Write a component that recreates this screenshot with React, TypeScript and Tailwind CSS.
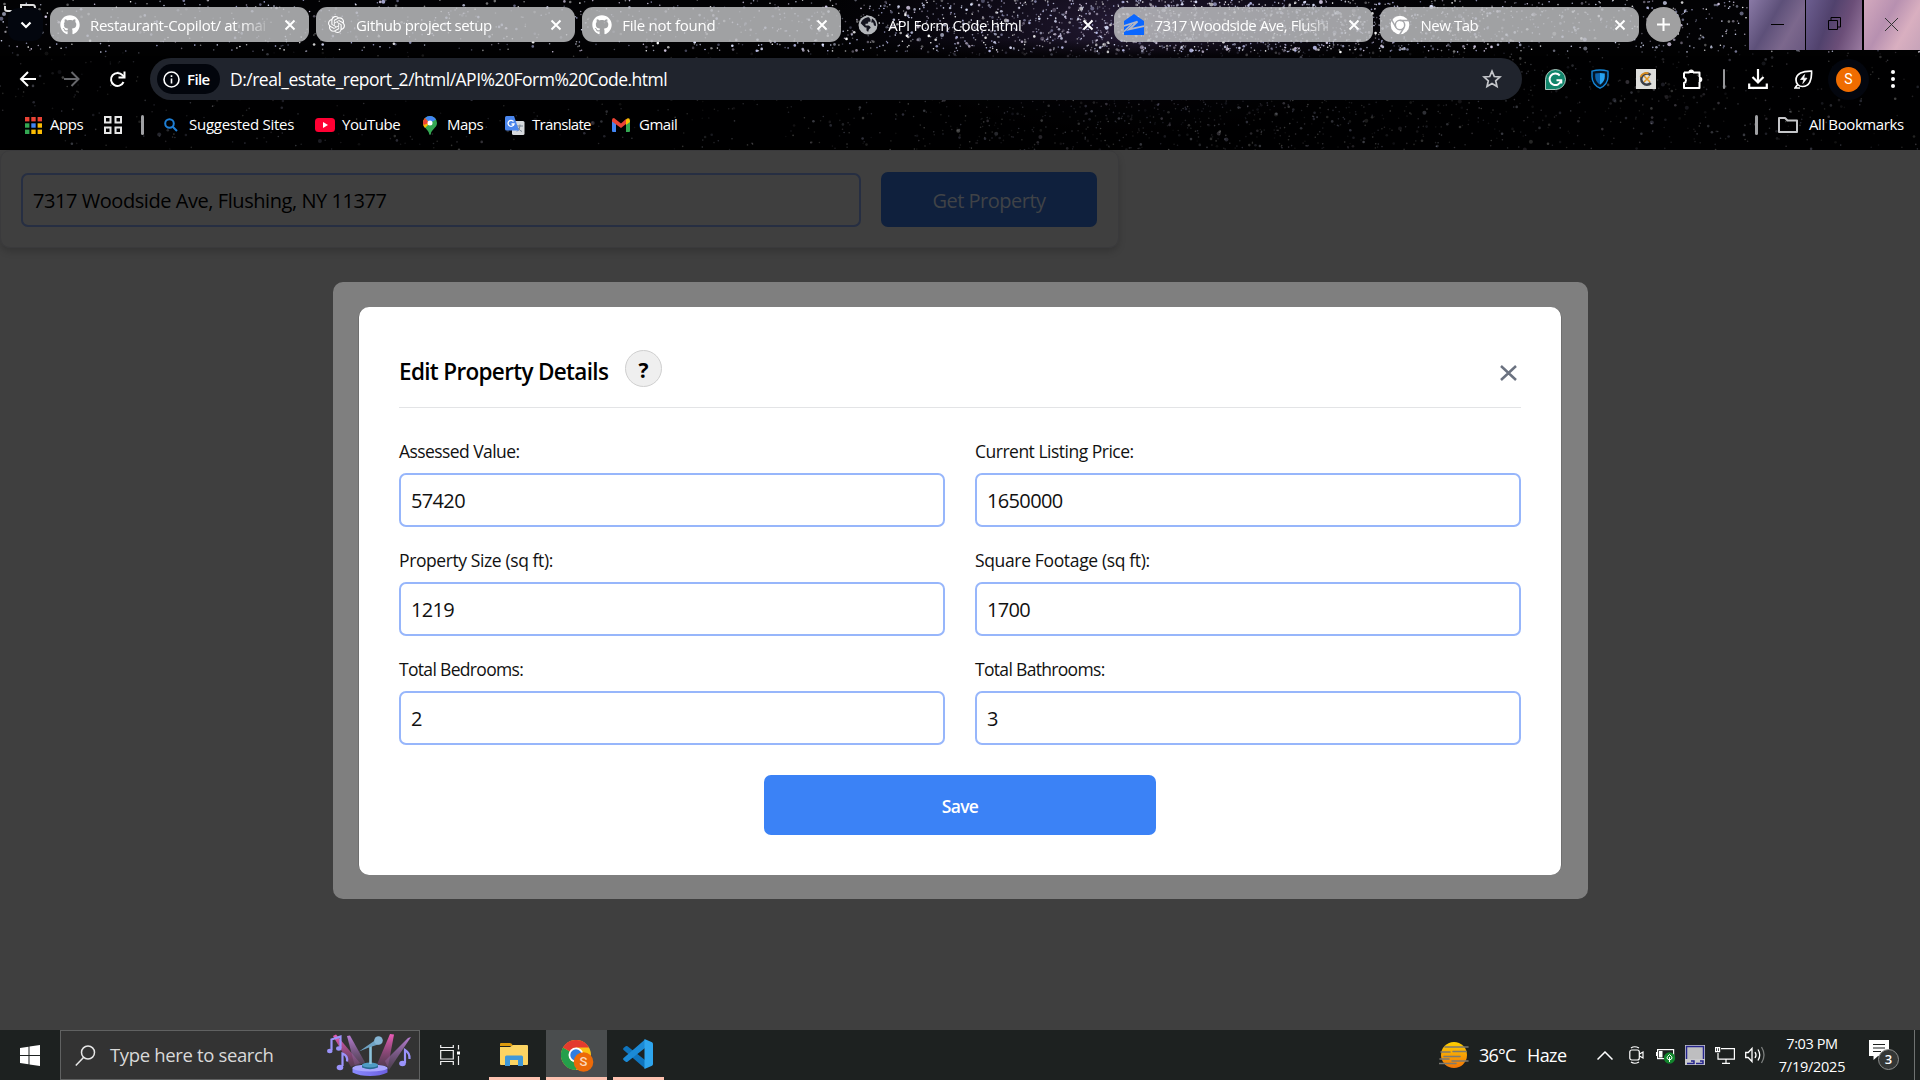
import React from "react";
import { FaGithub } from "react-icons/fa";
import { SiOpenai } from "react-icons/si";

function makeRandom(seed: number) {
  let s = seed;
  return () => {
    s = (s * 1664525 + 1013904223) % 4294967296;
    return s / 4294967296;
  };
}

type Star = { x: number; y: number; r: number; o: number; c: string };

function makeStars(): Star[] {
  const rnd = makeRandom(42);
  const out: Star[] = [];
  const colors = ["#ffffff", "#dfe4ff", "#b9bce8", "#cfc4de"];
  while (out.length < 4600) {
    const x = rnd() * 1920;
    const y = rnd() * 150;
    const d = (x - 1220) / 330;
    const density = 0.2 + 0.8 * Math.exp(-d * d);
    if (rnd() > density) continue;
    const low = y > 52;
    if (low && rnd() > 0.4) continue;
    const big = rnd();
    out.push({
      x: Math.round(x * 10) / 10,
      y: Math.round(y * 10) / 10,
      r: big > 0.985 ? 2 : big > 0.82 ? 1.3 : 0.8,
      o: low ? 0.06 + rnd() * 0.2 : 0.3 + rnd() * 0.7,
      c: colors[Math.floor(rnd() * 4)],
    });
  }
  return out;
}

const stars = makeStars();

const Starfield = () => (
  <svg className="absolute inset-0" width="1920" height="150" viewBox="0 0 1920 150">
    <defs>
      <radialGradient id="nebula" cx="0.5" cy="0.5" r="0.5">
        <stop offset="0" stopColor="#3a2a52" stopOpacity="0.65" />
        <stop offset="1" stopColor="#120c24" stopOpacity="0" />
      </radialGradient>
      <linearGradient id="shade" x1="0" y1="0" x2="0" y2="1">
        <stop offset="0" stopColor="#000" stopOpacity="0" />
        <stop offset="1" stopColor="#000" stopOpacity="0.75" />
      </linearGradient>
    </defs>
    <rect width="1920" height="150" fill="#020204" />
    <ellipse cx="1130" cy="25" rx="300" ry="120" fill="url(#nebula)" />
    <rect y="40" width="1920" height="16" fill="url(#shade)" />
    <rect y="56" width="1920" height="94" fill="#000" opacity="0.72" />
    {stars.map((s, i) => (
      <circle key={i} cx={s.x} cy={s.y} r={s.r} fill={s.c} opacity={s.o} />
    ))}
    <path d="M5 6v3q0 2 2.500 2h5M21 8V5h12q2 0 2 3" stroke="#ddd" strokeWidth="2" fill="none" />
  </svg>
);

const Cross = ({ className = "" }: { className?: string }) => (
  <svg className={className} width="12" height="12" viewBox="0 0 12 12" stroke="currentColor" strokeWidth="2">
    <path d="M1.500 1.500l9 9M10.500 1.500l-9 9" />
  </svg>
);

const Globe = () => (
  <svg width="20" height="20" viewBox="0 0 20 20">
    <circle cx="10" cy="10" r="9.500" fill="#b4b7bb" />
    <path d="M11 2.200c-4 0-7 2.500-8.300 6L7 12.500h1.500V15c0 1 1 1.500 2 1.600 0-2 .5-2.600 2-3.600.5-.8-.5-2-2-2.500H7.500V8.800H9c1.500 0 1.200-1 1.200-2h2.300V4.500z" fill="#14141f" />
    <path d="M14 3.500l-.8 4h2l.8 3 2 .5c.3-3-1-6-4-7.500z" fill="#14141f" />
  </svg>
);

const Zillow = () => (
  <svg width="20" height="21" viewBox="0 0 20 21">
    <path d="M10 0l10 7v14H0V7z" fill="#0a66ff" />
    <path d="M0 12L13.500 7.500 5 15.500l15-3.300" fill="none" stroke="#b4b7c4" strokeWidth="1.800" />
    <path d="M0 17.500L8 10" fill="none" stroke="#b4b7c4" strokeWidth="1.500" />
  </svg>
);

const ChromeMono = () => (
  <svg width="20" height="20" viewBox="0 0 20 20" fill="none">
    <circle cx="10" cy="10" r="9.300" fill="#fff" />
    <circle cx="10" cy="10" r="4.700" stroke="#a6a7ab" strokeWidth="1.500" />
    <path d="M10 5.500h9M6 12.500L1.700 4.800M14 12.500L9.500 20" stroke="#a6a7ab" strokeWidth="1.500" />
  </svg>
);

type TabProps = {
  icon: React.ReactNode;
  title: string;
  spacing: string;
  active?: boolean;
};

const Tab = ({ icon, title, spacing, active }: TabProps) => (
  <div
    className={`flex h-[35px] w-[258.500px] shrink-0 items-center rounded-[11px] pr-[13px] pl-2.5 text-white ${
      active ? "" : "bg-[#bfc0c2]/84"
    }`}
  >
    <span className="flex w-5 justify-center">{icon}</span>
    <span
      className={`ml-2.5 h-5 w-[185px] text-[15px] leading-5 whitespace-nowrap [mask-image:linear-gradient(90deg,#000_150px,transparent_182px)] ${spacing}`}
    >
      {title}
    </span>
    <Cross className="ml-auto shrink-0" />
  </div>
);

const TabStrip = () => (
  <div className="flex h-[50px] items-start">
    <div className="mt-2 ml-2 flex h-[33px] w-[35px] items-center justify-center rounded-[10px] bg-[#03060e]">
      <svg width="12" height="8" viewBox="0 0 12 8" fill="none" stroke="#fff" strokeWidth="2.200">
        <path d="M1.500 1.500L6 6l4.500-4.500" />
      </svg>
    </div>
    <div className="mt-[7px] ml-[7px] flex gap-[7.600px]">
      <Tab icon={<FaGithub size={20} />} title="Restaurant-Copilot/ at mai" spacing="tracking-[-0.31px]" />
      <Tab icon={<SiOpenai size={17} />} title="Github project setup" spacing="tracking-[-0.4px]" />
      <Tab icon={<FaGithub size={20} />} title="File not found" spacing="tracking-[-0.25px]" />
      <Tab icon={<Globe />} title="API Form Code.html" spacing="tracking-[-0.35px]" active />
      <Tab icon={<Zillow />} title="7317 Woodside Ave, Flushi" spacing="tracking-[-0.45px]" />
      <Tab icon={<ChromeMono />} title="New Tab" spacing="tracking-[-0.45px]" />
    </div>
    <div className="mt-[7px] ml-[7px] flex size-[35px] items-center justify-center rounded-full bg-[#a0a0a1]">
      <svg width="13" height="13" viewBox="0 0 13 13" stroke="#fff" strokeWidth="2">
        <path d="M6.500 0v13M0 6.500h13" />
      </svg>
    </div>
    <div className="ml-auto flex h-[50px] w-[171px] gap-px bg-black text-black">
      <div className="flex h-full w-[56px] items-center justify-center bg-[linear-gradient(120deg,#8a7aa6,#5d5079_40%,#7c688d_70%,#6a5880)]">
        <svg width="13" height="13" viewBox="0 0 13 13" stroke="currentColor"><path d="M0 5.500h13" /></svg>
      </div>
      <div className="flex h-full w-[56px] items-center justify-center bg-[linear-gradient(110deg,#6c5e90,#51426d_40%,#6b4e78_65%,#9a7ba0)]">
        <svg className="-mt-1" width="13" height="13" viewBox="0 0 13 13" fill="none" stroke="currentColor">
          <path d="M.5 3.500h9v9h-9zM3 3V.5h9.500V10H10" />
        </svg>
      </div>
      <div className="ml-px flex h-full flex-1 items-center justify-center bg-[linear-gradient(120deg,#d3a9be,#b790b0_40%,#d9afc0_70%,#c7a3b9)] text-[#333]">
        <svg className="-mt-0.5 mr-0.5" width="13" height="13" viewBox="0 0 13 13" stroke="currentColor"><path d="M0 0l13 13M13 0L0 13" /></svg>
      </div>
    </div>
  </div>
);

const Toolbar = () => (
  <div className="mt-2 flex h-[42px] items-center text-white">
    <svg className="ml-[19px]" width="17" height="16" viewBox="0 0 17 16" fill="none" stroke="#fff" strokeWidth="2">
      <path d="M9 1L2 8l7 7M2 8H17" />
    </svg>
    <svg className="ml-7" width="16" height="16" viewBox="0 0 16 16" fill="none" stroke="#66676b" strokeWidth="2">
      <path d="M7.500 1l7 7-7 7M14.500 8H0" />
    </svg>
    <svg className="ml-[29px]" width="17" height="17" viewBox="0 0 17 17" fill="none" stroke="#fff" strokeWidth="2">
      <path d="M14.500 11A6.500 6.500 0 1 1 13.500 4.200L15.500 6.300" />
      <path d="M15.500 .5v6h-6" />
    </svg>
    <div className="ml-6 flex h-[42px] w-[1372px] items-center rounded-full bg-[#20242d] pl-[7px]">
      <div className="flex h-[30px] w-[63px] items-center rounded-full bg-[#02050c] pl-1.5">
        <svg width="17" height="17" viewBox="0 0 17 17" fill="none" stroke="#fff" strokeWidth="1.600">
          <circle cx="8.500" cy="8.500" r="7.500" />
          <path d="M8.500 7.500v5M8.500 4.300v1.800" />
        </svg>
        <span className="ml-[7px] text-[15px] leading-5 font-semibold tracking-[-0.6px]">File</span>
      </div>
      <span className="ml-2.5 text-[17.500px] leading-6 tracking-[-0.5px]">
        D:/real_estate_report_2/html/API%20Form%20Code.html
      </span>
      <svg className="mr-5 ml-auto" width="20" height="20" viewBox="0 0 20 20" fill="none" stroke="#c4c6ca" strokeWidth="1.700">
        <path d="M10 2.200l2.300 5.300 5.700.5-4.300 3.800 1.300 5.700-5-3-5 3 1.300-5.700L2 8l5.700-.5z" />
      </svg>
    </div>
    <svg className="ml-[23px]" width="21" height="21" viewBox="0 0 21 21" fill="none">
      <path d="M10.500.5a10 10 0 1 1 0 20H.5v-10a10 10 0 0 1 10-10z" fill="#11856b" stroke="#cfe8e0" strokeWidth=".8" />
      <path d="M14.800 6.500a5.800 5.800 0 1 0 1.300 4.700H11.500M16.300 11v3.500" stroke="#fff" strokeWidth="2" />
    </svg>
    <svg className="ml-[25px]" width="18" height="20" viewBox="0 0 18 20">
      <path d="M9 1q4 0 8 1.200v5.500c0 5-3 9-8 11.500C4 16.700 1 12.700 1 7.700V2.200Q5 1 9 1z" fill="#041526" stroke="#1485d6" strokeWidth="1.400" />
      <path d="M9 4v11.800C5.700 13.500 4.200 11 4.200 7.500V4.500z" fill="#0d64ae" />
      <path d="M9 4l4.800.5v3C13.800 11 12.300 13.500 9 15.800z" fill="#27a3f0" />
    </svg>
    <svg className="ml-[27px]" width="20" height="20" viewBox="0 0 20 20" fill="none">
      <rect width="20" height="20" fill="#dededc" />
      <path d="M14.500 6a5.500 5.500 0 1 0 .3 8" stroke="#3b3f48" strokeWidth="2.600" />
      <path d="M4.500 8a6 6 0 0 1 8-3.500" stroke="#d98d20" strokeWidth="1.800" />
      <path d="M8 7l6 6M13.500 7.500L8 13" stroke="#e59a25" strokeWidth="1.500" />
    </svg>
    <svg className="ml-[26px]" width="21" height="20" viewBox="0 0 21 20" fill="none" stroke="#fff" strokeWidth="2">
      <path d="M2 3.500h5.500M11 3.500h6.500V8M17.500 13v6H2v-5a2.900 2.900 0 0 0 0-5.500v-5" strokeLinejoin="round" />
      <path d="M7 3.500a2.200 2.500 0 0 1 4.400 0zM17.500 8.300a2.200 2.200 0 0 1 0 4.400z" fill="#fff" strokeWidth="1.200" />
    </svg>
    <div className="ml-5 h-5 w-0.5 rounded bg-[#98999c]" />
    <svg className="ml-[23px]" width="20" height="20" viewBox="0 0 20 20" fill="none" stroke="#fff" strokeWidth="2.200">
      <path d="M10 0v13M4.500 8l5.500 5.500L15.500 8M1.200 14.500V18.800h17.600V14.500" />
    </svg>
    <svg className="ml-[26px]" width="19" height="19" viewBox="0 0 19 19" fill="none" stroke="#fff" strokeWidth="1.700">
      <path d="M17.500 1.200C9 1 2 3 2 10c0 4 3 6.500 6.500 6.500C15.500 16.500 18 10 17.500 1.200zM3.500 14.500L1 18h5" />
      <path d="M10.500 4.500L6.500 9.500h3.300l-1 4 4.200-5.300H9.800z" fill="#fff" strokeWidth=".7" />
    </svg>
    <div className="ml-[15px] flex size-[41px] items-center justify-center rounded-full bg-[#03060e]">
      <div className="flex size-[25px] items-center justify-center rounded-full bg-[#ef6c00] font-['Roboto'] text-[14px]">S</div>
    </div>
    <div className="ml-[22px] flex flex-col gap-[3px]">
      <i className="size-1 rounded-full bg-white" />
      <i className="size-1 rounded-full bg-white" />
      <i className="size-1 rounded-full bg-white" />
    </div>
  </div>
);

const appColors = ["#ea4335", "#ea4335", "#ea4335", "#34a853", "#4285f4", "#fbbc04", "#34a853", "#fbbc04", "#fbbc04"];

const BookmarksBar = () => (
  <div className="flex h-[50px] items-center text-[15px] leading-5 text-white [&>span]:-mt-0.5">
    <svg className="ml-[25px]" width="17" height="17" viewBox="0 0 17 17">
      {appColors.map((c, i) => (
        <rect key={i} x={(i % 3) * 6.300} y={Math.floor(i / 3) * 6.300} width="4.400" height="4.400" fill={c} />
      ))}
    </svg>
    <span className="ml-2 w-[54px] tracking-[-0.45px]">Apps</span>
    <svg width="18" height="18" viewBox="0 0 18 18" fill="none" stroke="#e8e8e8" strokeWidth="2">
      <path d="M1 1h5.500v5.500H1zM11.500 1H17v5.500h-5.500zM1 11.500h5.500V17H1zM11.500 11.500H17V17h-5.500z" />
    </svg>
    <div className="ml-[19px] h-5 w-[3px] rounded bg-[#a0a1a4]" />
    <svg className="ml-5" width="14" height="14" viewBox="0 0 14 14" fill="none" stroke="#1e7fd6" strokeWidth="2">
      <circle cx="5.500" cy="5.500" r="4.300" />
      <path d="M8.700 8.700L13 13" />
    </svg>
    <span className="ml-[11px] w-[126px] tracking-[-0.27px]">Suggested Sites</span>
    <svg width="20" height="14" viewBox="0 0 20 14">
      <rect width="20" height="14" rx="3.500" fill="#ff0033" />
      <path d="M8 4l5 3-5 3z" fill="#fff" />
    </svg>
    <span className="ml-[7px] w-[81px] tracking-[-0.5px]">YouTube</span>
    <svg width="14" height="19" viewBox="0 0 14 19">
      <path d="M0 7a7 7 0 0 1 14 0c0 5-5.500 6-6.200 11q-.8 2-1.600 0C5.500 13 0 12 0 7z" fill="#34a853" />
      <path d="M0 7a7 7 0 0 1 2-5l5 5-5 5Q0 10 0 7z" fill="#fbbc04" />
      <path d="M7 0a7 7 0 0 1 6 3.500L7 7 2 2Q4 0 7 0z" fill="#4285f4" />
      <path d="M2 2l4 5L.5 9Q-1 5 2 2z" fill="#ea4335" />
      <circle cx="7" cy="7" r="2.500" fill="#fff" />
    </svg>
    <span className="ml-2.5 w-[58px] tracking-[-0.5px]">Maps</span>
    <svg width="20" height="19" viewBox="0 0 20 19">
      <rect x="7" y="5" width="12.500" height="14" rx="1.500" fill="#d7dade" />
      <path d="M12 10h6M15 8.500V10q-.5 4-3 5.500M13 11.500q1 3 4 4" stroke="#7b8794" fill="none" />
      <path d="M1.500 0H9l5 14.500H1.500Q0 14.500 0 13V1.500Q0 0 1.500 0z" fill="#4a86ee" />
      <path d="M8.500 5.500A3 3 0 1 0 9 8H6.500" stroke="#fff" strokeWidth="1.300" fill="none" />
    </svg>
    <span className="ml-[7px] w-20 tracking-[-0.68px]">Translate</span>
    <svg width="18" height="14" viewBox="0 0 18 14">
      <path d="M0 2h4v12H1q-1 0-1-1z" fill="#4285f4" />
      <path d="M14 2h4v11q0 1-1 1h-3z" fill="#34a853" />
      <path d="M0 2q0-2 2-2l7 5.500L14 1v5L9 10 0 3.500z" fill="#ea4335" />
      <path d="M14 1.500Q16-.5 17.500.8L18 4l-4 3z" fill="#fbbc04" />
    </svg>
    <span className="ml-[9px] tracking-[-0.5px]">Gmail</span>
    <div className="ml-auto h-5 w-[3px] rounded bg-[#a0a1a4]" />
    <svg className="ml-5" width="20" height="16" viewBox="0 0 20 16" fill="none" stroke="#c4c5c8" strokeWidth="2">
      <path d="M1 1h6l2.500 2.500H19V15H1z" strokeLinejoin="round" />
    </svg>
    <span className="mr-4 ml-[11px] w-[95px] tracking-[-0.4px] whitespace-nowrap">All Bookmarks</span>
  </div>
);

type FieldProps = { label: string; value: string; spacing: string };

const Field = ({ label, value, spacing }: FieldProps) => (
  <label className="flex h-[109px] flex-col">
    <span className={`h-[34px] text-[17.500px] leading-6 text-[#111] ${spacing}`}>{label}</span>
    <span className="flex h-[54px] items-center rounded-[7px] border-2 border-[#97b6fb] px-2.5 pt-0.5 text-[20px] tracking-[-0.65px] text-[#111]">
      {value}
    </span>
  </label>
);

const fields: FieldProps[] = [
  { label: "Assessed Value:", value: "57420", spacing: "tracking-[-0.57px]" },
  { label: "Current Listing Price:", value: "1650000", spacing: "tracking-[-0.5px]" },
  { label: "Property Size (sq ft):", value: "1219", spacing: "tracking-[-0.4px]" },
  { label: "Square Footage (sq ft):", value: "1700", spacing: "tracking-[-0.35px]" },
  { label: "Total Bedrooms:", value: "2", spacing: "tracking-[-0.68px]" },
  { label: "Total Bathrooms:", value: "3", spacing: "tracking-[-0.68px]" },
];

const Page = () => (
  <main className="relative h-[880px] bg-[#3f3f3f]">
    <section className="flex h-[98px] w-[1119px] items-start rounded-[10px] border border-[#3a3a3c] pt-[21px] pl-5 shadow-[0_4px_7px_rgba(0,0,0,0.16)]">
      <div className="mt-px flex h-[54px] w-[840px] items-center rounded-[7px] border-2 border-[#262e42] px-2.5 pt-0.5 text-[20px] tracking-[-0.44px] text-black">
        7317 Woodside Ave, Flushing, NY 11377
      </div>
      <button className="ml-5 h-[55px] w-[216px] rounded-[7px] bg-[#0f203d] pt-[3px] text-[20px] tracking-[-0.5px] text-[#404347]">
        Get Property
      </button>
    </section>
    <div className="absolute top-[132px] left-[333px] h-[617px] w-[1255px] rounded-[10px] bg-[#7f7f7f] px-[26px] pt-[25px]">
      <div className="h-[568px] w-[1202px] rounded-[10px] bg-white px-10 shadow-[1px_0_0_-0.500px_rgba(0,0,0,0.25),-1px_0_0_-0.500px_rgba(0,0,0,0.25)]">
        <header className="flex h-[101px] items-start border-b border-[#e3e4e6]">
          <h2 className="mt-[49px] w-[226px] text-[22.500px] leading-8 font-semibold tracking-[-0.67px] whitespace-nowrap text-black">
            Edit Property Details
          </h2>
          <button className="mt-[43px] flex size-[37px] items-center justify-center rounded-full border border-[#cfcfcf] bg-[#efefef] pt-1 text-[21px] font-bold text-black">
            ?
          </button>
          <svg className="mt-[58px] mr-1 ml-auto" width="17" height="16" viewBox="0 0 17 16" stroke="#6b7280" strokeWidth="2.500">
            <path d="M1 1l15 14M16 1L1 15" />
          </svg>
        </header>
        <div className="mt-[31px] grid grid-cols-2 gap-x-[30px]">
          {fields.map((f) => (
            <Field key={f.label} {...f} />
          ))}
        </div>
        <button className="mx-auto mt-[9px] block h-[60px] w-[392px] rounded-[7px] bg-[#3b82f6] pt-0.5 text-[17.500px] font-semibold tracking-[-0.7px] text-white">
          Save
        </button>
      </div>
    </div>
  </main>
);

const StageArt = () => (
  <svg width="86" height="48" viewBox="0 0 86 48">
    <defs>
      <linearGradient id="beamPink" x1="0" y1="0" x2="0" y2="1">
        <stop offset="0" stopColor="#ee5cb8" />
        <stop offset="1" stopColor="#8a4a80" stopOpacity=".4" />
      </linearGradient>
      <linearGradient id="beamPurple" x1="0" y1="0" x2="0" y2="1">
        <stop offset="0" stopColor="#b97fd6" />
        <stop offset="1" stopColor="#7a5580" stopOpacity=".35" />
      </linearGradient>
      <linearGradient id="podium" x1="0" y1="0" x2="1" y2="0">
        <stop offset="0" stopColor="#8a8bff" />
        <stop offset="1" stopColor="#6c5fe0" />
      </linearGradient>
    </defs>
    <path d="M6 5l3-1.500L33 32l-9 4z" fill="url(#beamPink)" />
    <path d="M20 5l3-.5 15 27-10 4z" fill="url(#beamPurple)" />
    <path d="M63 3l4 .5-6 32-11-2z" fill="url(#beamPink)" />
    <path d="M81 7l3-1-22 33-4-9z" fill="url(#beamPurple)" />
    <path d="M25.500 37v4.500q7 3.500 17.500 3.500t17.500-3.500V37z" fill="url(#podium)" />
    <ellipse cx="43" cy="37" rx="17.500" ry="3.500" fill="#a9a6ff" />
    <path d="M35 34v2.500q8 3.500 16 0V34z" fill="#2a6a94" />
    <ellipse cx="43" cy="34" rx="8" ry="2.500" fill="#4f9cc4" />
    <path d="M43.500 15v18" stroke="#8cc3dc" strokeWidth="2.600" />
    <path d="M32 20.500L50 8l2.500 5-12 4z" fill="#6fa3c4" />
    <circle cx="51.500" cy="9.500" r="4.300" fill="#86b5d4" />
    <g fill="none" stroke="#9b93fb" strokeWidth="2.200">
      <path d="M4.500 19V8.500l9-3V17M15.500 35V22.500q5.500 2 4.500 8M78 32V19q5 3 4.500 9" />
    </g>
    <g fill="#9b93fb">
      <ellipse cx="2.800" cy="20" rx="2.700" ry="2.200" />
      <ellipse cx="11.800" cy="17.500" rx="2.700" ry="2.200" />
      <ellipse cx="13" cy="36.500" rx="3.300" ry="2.800" />
      <ellipse cx="75.500" cy="32.500" rx="3.300" ry="2.800" />
    </g>
  </svg>
);

const ChromeColor = () => (
  <svg width="33" height="33" viewBox="0 0 33 33">
    <circle cx="15" cy="15" r="15" fill="#fbc116" />
    <path d="M15 15L2 7.500A15 15 0 0 0 15 30l6.500-11z" fill="#249f4b" />
    <path d="M15 15L2 7.500A15 15 0 0 1 28 7.500H15z" fill="#e33b2e" />
    <circle cx="15" cy="15" r="7.500" fill="#fff" />
    <circle cx="15" cy="15" r="5.700" fill="#2f7de1" />
    <circle cx="22.500" cy="22" r="9.800" fill="#ec6a08" />
  </svg>
);

const Taskbar = () => (
  <footer className="flex h-[50px] items-center bg-[#1d2120] text-white">
    <svg className="ml-5" width="20" height="21" viewBox="0 0 20 21" fill="#fff">
      <path d="M0 3l8.500-1.300V10H0zM9.500 1.500L20 0v10H9.500zM0 11h8.500v8.300L0 18zM9.500 11H20v10L9.500 19.500z" />
    </svg>
    <div className="ml-5 flex h-[50px] w-[360px] items-center border border-[#606161] bg-[#333333] pl-3.5">
      <svg width="21" height="21" viewBox="0 0 21 21" fill="none" stroke="#e8e8e8" strokeWidth="1.500">
        <circle cx="13" cy="7.500" r="6.500" />
        <path d="M8.500 12.500L.8 20.500" />
      </svg>
      <span className="ml-3.5 w-[217px] text-[18.500px] tracking-[-0.35px] text-[#d9d9d9]">Type here to search</span>
      <StageArt />
    </div>
    <svg className="ml-5" width="20" height="20" viewBox="0 0 20 20" fill="none" stroke="#f0f0f0" strokeWidth="1.200">
      <path d="M.7 0v2.500h12.600V0M.7 20v-3.500h12.600V20M.7 5.500h12.600v8.500H.7zM18.500 0v4.500M18.500 11v9" />
      <path d="M17 6.500h3v3h-3z" fill="#fff" stroke="none" />
    </svg>
    <div className="ml-[29px] flex h-[50px] w-[51px] items-center justify-center border-b-[3px] border-[#fdc2b0]">
      <svg className="mt-0.5 mr-0.5" width="28" height="23" viewBox="0 0 28 23">
        <path d="M0 1q0-1 1-1h9q2 0 3 3H0z" fill="#dc9a0c" />
        <path d="M0 4h10l3-2h14q1 0 1 1v18q0 1-1 1H1q-1 0-1-1z" fill="#fcd462" />
        <path d="M5 23v-9q0-1.500 1.500-1.500h15q1.500 0 1.500 1.500v9h-5v-6h-8v6z" fill="#3f98d8" />
      </svg>
    </div>
    <div className="ml-1.5 h-[50px] w-[61px] border-b-[3px] border-[#fdc2b0] bg-[#4a4d4e]">
      <div className="relative mt-2.5 ml-[15px] size-[33px]">
        <ChromeColor />
        <span className="absolute top-3 left-[17.500px] w-2.5 text-center font-['Roboto'] text-[13px] leading-5 font-medium text-[#fbd9bd]">S</span>
      </div>
    </div>
    <div className="ml-1.5 flex h-[50px] w-[51px] items-center justify-center border-b-[3px] border-[#fdc2b0]">
      <svg className="mr-0.5" width="30" height="30" viewBox="0 0 30 30">
        <path d="M.5 9l2.200-1.700q1-.6 1.800 0L22 21v8.500L.6 11q-1-1 0-2z" fill="#0f74bd" />
        <path d="M.5 21l2.200 1.700q1 .6 1.800 0L22 9V.5L.6 19q-1 1 0 2z" fill="#1b8ad6" />
        <path d="M21.500 0L29 3.300q1 .6 1 2V25q0 1.200-1 1.700L21.500 30z" fill="#2ea5ee" />
      </svg>
    </div>

    <svg className="ml-auto" width="30" height="26" viewBox="0 0 30 26">
      <defs>
        <linearGradient id="sun" x1="0" y1="0" x2="0" y2="1">
          <stop offset="0" stopColor="#ffd000" />
          <stop offset="1" stopColor="#f07408" />
        </linearGradient>
      </defs>
      <circle cx="15" cy="13" r="13" fill="url(#sun)" />
      <path d="M6 5h23M2 10h9M14 9.500h13M5 14.500h16M1 17h9M13 19h16M0 21.500h17" stroke="#7d7a70" strokeWidth="1.600" strokeLinecap="round" />
    </svg>
    <span className="ml-2.5 w-12 text-[18px] tracking-[-0.8px] whitespace-nowrap">36°C</span>
    <span className="w-[70px] text-[18px] tracking-[-0.6px]">Haze</span>
    <svg width="16" height="9" viewBox="0 0 16 9" fill="none" stroke="#fff" strokeWidth="1.500">
      <path d="M.5 8.500L8 1l7.500 7.500" />
    </svg>
    <svg className="ml-4" width="15" height="18" viewBox="0 0 15 18" fill="none" stroke="#fff" strokeWidth="1.200">
      <rect x=".8" y="4" width="9.500" height="10" rx="2" />
      <path d="M10.500 8l3.500-2v6l-3.500-2M2 2q3.500-2.500 8 0M2 16q3.500 2.500 8 0" />
    </svg>
    <svg className="ml-3" width="20" height="17" viewBox="0 0 20 17" fill="none">
      <rect x="1.600" y="2.600" width="16" height="9" stroke="#fff" strokeWidth="1.200" />
      <path d="M3 4h3.500v6.500H3zM0 5h1v4H0z" fill="#fff" />
      <circle cx="13.500" cy="11" r="5.700" fill="#12862d" />
      <path d="M13.500 7.500q-5 4 0 5.500 5-1.500 0-5.500zM13.500 10v5" stroke="#fff" />
    </svg>
    <svg className="ml-[9px]" width="20" height="20" viewBox="0 0 20 20">
      <rect width="20" height="20" fill="#c9c9cd" />
      <path d="M1.500 14V1.500h17V14" fill="#bebec0" stroke="#25258c" strokeWidth="1.500" />
      <path d="M2 18.500h7v-2.500H6M11 18.500h7v-2.500h-3" fill="none" stroke="#25258c" strokeWidth="1.500" />
    </svg>
    <svg className="ml-2.5" width="20" height="17" viewBox="0 0 20 17" fill="none" stroke="#fff" strokeWidth="1.200">
      <path d="M6 1.600h13.400v10.500H3V6M11 12v4M7 16.300h8" />
      <path d="M.6.600h4v4h-4zM2.600 1v3" />
    </svg>
    <svg className="ml-2.5" width="20" height="18" viewBox="0 0 20 18" fill="none" stroke="#fff" strokeWidth="1.300">
      <path d="M.7 6.500h2.500L7 2.500v13l-3.800-4H.7z" />
      <path d="M10 6q2 3 0 6M13 3.500q3.500 5.500 0 11" />
      <path d="M16.500 1q5 8 0 16" stroke="#7c7f7e" />
    </svg>
    <div className="ml-2 flex w-[78px] flex-col items-center text-[14.500px] leading-[23px] tracking-[-0.25px] whitespace-nowrap">
      <span className="tracking-[-0.4px]">7:03 PM</span>
      <span>7/19/2025</span>
    </div>
    <div className="relative ml-[18px] h-[30px] w-[31px]">
      <svg width="20" height="20" viewBox="0 0 20 20">
        <path d="M0 0h20v16H9l-4.500 4v-4H0z" fill="#fff" />
        <path d="M4 4.500h12M4 8h12M4 11.500h8" stroke="#1d2120" strokeWidth="1.200" />
      </svg>
      <span className="absolute top-[9px] left-[9px] flex size-[21px] items-center justify-center rounded-full border border-[#8c8e8d] bg-[#343736] text-[13px] font-semibold">
        3
      </span>
    </div>
    <div className="mr-[5px] ml-3.5 h-[50px] w-px bg-[#6f7271]" />
  </footer>
);

export default function App() {
  return (
    <div className="h-[1080px] w-[1920px] overflow-hidden bg-black font-['Open_Sans','Noto_Sans',sans-serif]">
      <div className="relative h-[150px]">
        <Starfield />
        <div className="relative">
          <TabStrip />
          <Toolbar />
          <BookmarksBar />
        </div>
      </div>
      <Page />
      <Taskbar />
    </div>
  );
}
